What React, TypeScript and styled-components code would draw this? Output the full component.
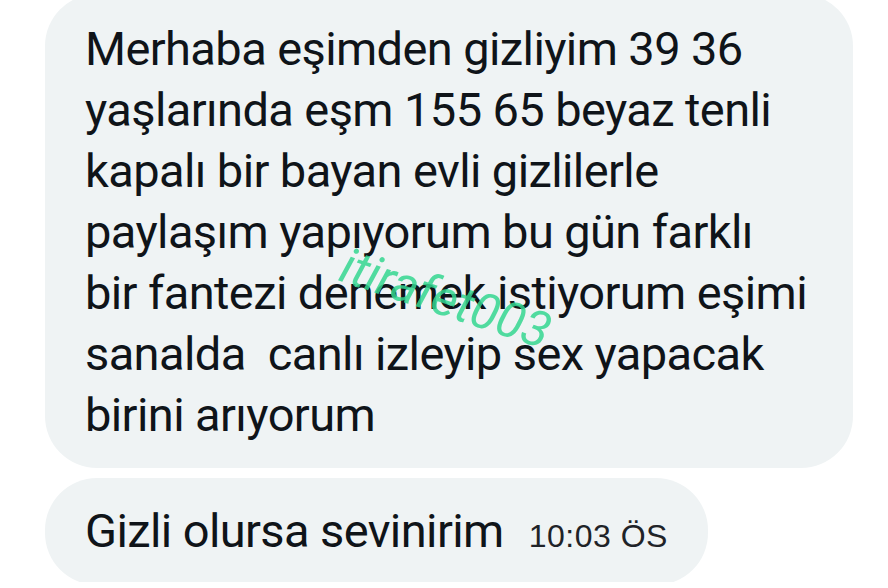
import styled, { createGlobalStyle } from "styled-components";

const GlobalStyle = createGlobalStyle`
  html, body {
    margin: 0;
    padding: 0;
    background: #ffffff;
    overflow: hidden;
  }
`;

const Thread = styled.div`
  width: 888px;
  height: 588px;
  display: flex;
  flex-direction: column;
  align-items: flex-start;
  gap: 10px;
  padding: 0 0 0 45px;
  margin-top: -6px;
  box-sizing: border-box;
  font-family: Roboto, "Noto Sans", sans-serif;
  color: #0f1419;
`;

const Bubble = styled.div<{ $width?: number }>`
  position: relative;
  width: ${(p) => (p.$width ? `${p.$width}px` : "auto")};
  box-sizing: border-box;
  background: #eff3f4;
  border-radius: 52px;
`;

const LongText = styled.div`
  padding: 24px 30px 23px 40px;
  font-size: 47px;
  line-height: 61px;
  letter-spacing: -0.6px;
  white-space: pre-wrap;
`;

const ShortRow = styled.div`
  display: flex;
  align-items: baseline;
  gap: 25px;
  padding: 26px 40px 28px 40px;
`;

const ShortText = styled.span`
  font-size: 47px;
  letter-spacing: -0.6px;
  line-height: 53px;
`;

const Time = styled.span`
  font-family: "Liberation Sans", Arial, sans-serif;
  font-size: 32px;
  color: #1f2328;
  letter-spacing: 0.5px;
`;

const Watermark = styled.span`
  position: absolute;
  left: 292px;
  top: 244px;
  font-family: Roboto, sans-serif;
  font-style: italic;
  font-size: 50px;
  line-height: 1;
  letter-spacing: -0.3px;
  color: rgba(52, 214, 143, 0.85);
  transform: rotate(18.5deg);
  transform-origin: 0 42px;
  pointer-events: none;
`;

const lines = [
  "Merhaba eşimden gizliyim 39 36",
  "yaşlarında eşm 155 65 beyaz tenli",
  "kapalı bir bayan evli gizlilerle",
  "paylaşım yapıyorum bu gün farklı",
  "bir fantezi denemek istiyorum eşimi",
  "sanalda  canlı izleyip sex yapacak",
  "birini arıyorum",
];

export default function App() {
  return (
    <>
      <GlobalStyle />
      <Thread>
        <Bubble $width={808}>
          <LongText>{lines.join("\n")}</LongText>
          <Watermark>itirafet003</Watermark>
        </Bubble>
        <Bubble>
          <ShortRow>
            <ShortText>Gizli olursa sevinirim</ShortText>
            <Time>10:03 ÖS</Time>
          </ShortRow>
        </Bubble>
      </Thread>
    </>
  );
}
